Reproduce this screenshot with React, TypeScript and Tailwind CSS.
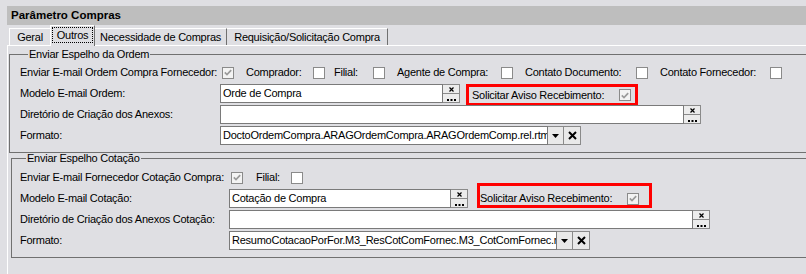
import React from 'react';

const body = "font-['Liberation_Sans',sans-serif] text-[11px] tracking-[-0.25px]";

function Check({ checked = false }: { checked?: boolean }) {
  return (
    <span
      className={`inline-flex h-[12px] w-[12px] shrink-0 items-center justify-center border border-[#8a8a8a] ${
        checked ? 'bg-[#f3f3f3]' : 'bg-white'
      }`}
    >
      {checked && (
        <svg width="8" height="7" viewBox="0 0 8 7">
          <path d="M0.8 3.4 L3 5.6 L7.2 1.2" stroke="#9a9a9a" strokeWidth="1.7" fill="none" />
        </svg>
      )}
    </span>
  );
}

function LookupButtons() {
  return (
    <div className="flex h-full w-[17px] shrink-0 flex-col">
      <div className="flex h-[10px] items-center justify-center border border-l-0 border-[#8a8a8a] bg-[#ececec]">
        <svg width="5" height="5" viewBox="0 0 5 5">
          <path d="M0.5 0.5 L4.5 4.5 M4.5 0.5 L0.5 4.5" stroke="#000" strokeWidth="1.2" />
        </svg>
      </div>
      <div className="flex flex-1 items-end justify-center border border-l-0 border-t-0 border-[#8a8a8a] bg-[#ececec] pb-[1px]">
        <svg width="9" height="2" viewBox="0 0 9 2">
          <rect x="0" y="0" width="2" height="2" fill="#000" />
          <rect x="3.5" y="0" width="2" height="2" fill="#000" />
          <rect x="7" y="0" width="2" height="2" fill="#000" />
        </svg>
      </div>
    </div>
  );
}

function TextBox({ value, width }: { value?: string; width: string }) {
  return (
    <div
      className={`flex h-full shrink-0 items-center overflow-hidden whitespace-nowrap border border-[#7a7a7a] bg-white pl-[2px] ${width}`}
    >
      {value}
    </div>
  );
}

function Combo({ value }: { value: string }) {
  return (
    <div className="flex h-full">
      <TextBox value={value} width="w-[328px]" />
      <div className="flex w-[16px] items-center justify-center border border-l-0 border-[#8a8a8a] bg-[#e9e9e9]">
        <svg width="7" height="4" viewBox="0 0 7 4">
          <path d="M0 0 H7 L3.5 4 Z" fill="#000" />
        </svg>
      </div>
      <div className="flex w-[17px] items-center justify-center border border-l-0 border-[#8a8a8a] bg-[#e9e9e9]">
        <svg width="9" height="9" viewBox="0 0 9 9">
          <path d="M1 1 L8 8 M8 1 L1 8" stroke="#000" strokeWidth="2" />
        </svg>
      </div>
    </div>
  );
}

function AvisoBox({ className }: { className: string }) {
  return (
    <div className={`flex shrink-0 items-center whitespace-nowrap border-[3px] border-[#ff0000] ${className}`}>
      <span className="w-[147px]">Solicitar Aviso Recebimento:</span>
      <Check checked />
    </div>
  );
}

export default function App() {
  return (
    <div className={`h-[274px] w-[806px] overflow-hidden bg-[#dfdfe3] pt-[6px] text-black ${body}`}>
      <div className="ml-[7px] flex h-[19px] items-center bg-[#bebebe] pl-[4px] text-[11.5px] font-bold tracking-normal">
        Parâmetro Compras
      </div>

      {/* abas */}
      <div className="ml-[7px] flex h-[20px] items-end whitespace-nowrap pl-[2px] leading-none">
        <div className="flex h-[17px] w-[41px] items-center justify-center border-l border-t border-white">Geral</div>
        <div className="relative z-10 -mb-px flex h-[21px] w-[45px] items-start justify-center border-l border-r border-t border-white border-r-[#707070] bg-[#dfdfe3] pt-[1px]">
          <span className="flex h-[16px] items-center border border-dotted border-black px-[4px]">Outros</span>
        </div>
        <div className="flex h-[17px] w-[132px] items-center justify-center border-r border-t border-white border-r-[#707070]">
          Necessidade de Compras
        </div>
        <div className="flex h-[17px] w-[161px] items-center justify-center border-r border-t border-white border-r-[#707070]">
          Requisição/Solicitação Compra
        </div>
      </div>

      <div className="ml-[7px] h-[300px] border-l border-t border-white pt-[3px]">
        <fieldset className="ml-[1px] h-[104px] w-[830px] border border-[#707070] pl-[10px] pt-[4px]">
          <legend className="ml-[8px] px-[1px] leading-[10px]">Enviar Espelho da Ordem</legend>
          <div className="flex flex-col gap-[2px]">
            <div className="flex h-[19px] items-center whitespace-nowrap">
              <span className="w-[200px]">Enviar E-mail Ordem Compra Fornecedor:</span>
              <span className="ml-[2px]"><Check checked /></span>
              <span className="ml-[12px] w-[67px]">Comprador:</span>
              <Check />
              <span className="ml-[9px] w-[39px]">Filial:</span>
              <Check />
              <span className="ml-[12px] w-[104px]">Agente de Compra:</span>
              <Check />
              <span className="ml-[12px] w-[111px]">Contato Documento:</span>
              <Check />
              <span className="ml-[12px] w-[110px]">Contato Fornecedor:</span>
              <Check />
            </div>
            <div className="flex h-[19px] items-start">
              <span className="flex h-[19px] w-[200px] items-center">Modelo E-mail Ordem:</span>
              <TextBox value="Orde de Compra" width="w-[223px]" />
              <LookupButtons />
              <AvisoBox className="ml-[6px] h-[22px] w-[172px] pl-[3px]" />
            </div>
            <div className="flex h-[19px] items-center">
              <span className="w-[200px]">Diretório de Criação dos Anexos:</span>
              <TextBox width="w-[464px]" />
              <LookupButtons />
            </div>
            <div className="flex h-[19px] items-center">
              <span className="w-[200px]">Formato:</span>
              <Combo value="DoctoOrdemCompra.ARAGOrdemCompra.ARAGOrdemComp.rel.rtm" />
            </div>
          </div>
        </fieldset>

        <fieldset className="ml-[3px] h-[105px] w-[830px] border border-[#707070] pl-[8px] pt-[5px]">
          <legend className="ml-[6px] px-[1px] leading-[10px]">Enviar Espelho Cotação</legend>
          <div className="flex flex-col gap-[2px]">
            <div className="flex h-[19px] items-center whitespace-nowrap">
              <span className="w-[209px]">Enviar E-mail Fornecedor Cotação Compra:</span>
              <span className="ml-[2px]"><Check checked /></span>
              <span className="ml-[13px] w-[35px]">Filial:</span>
              <Check />
            </div>
            <div className="flex h-[19px] items-start">
              <span className="flex h-[19px] w-[209px] items-center">Modelo E-mail Cotação:</span>
              <TextBox value="Cotação de Compra" width="w-[222px]" />
              <LookupButtons />
              <AvisoBox className="-mt-[6px] ml-[9px] h-[25px] w-[175px] pt-[6px]" />
            </div>
            <div className="flex h-[19px] items-center">
              <span className="w-[209px] whitespace-nowrap">Diretório de Criação dos Anexos Cotação:</span>
              <TextBox width="w-[464px]" />
              <LookupButtons />
            </div>
            <div className="flex h-[19px] items-center">
              <span className="w-[209px]">Formato:</span>
              <Combo value="ResumoCotacaoPorFor.M3_ResCotComFornec.M3_CotComFornec.rel.rtm" />
            </div>
          </div>
        </fieldset>
      </div>
    </div>
  );
}
